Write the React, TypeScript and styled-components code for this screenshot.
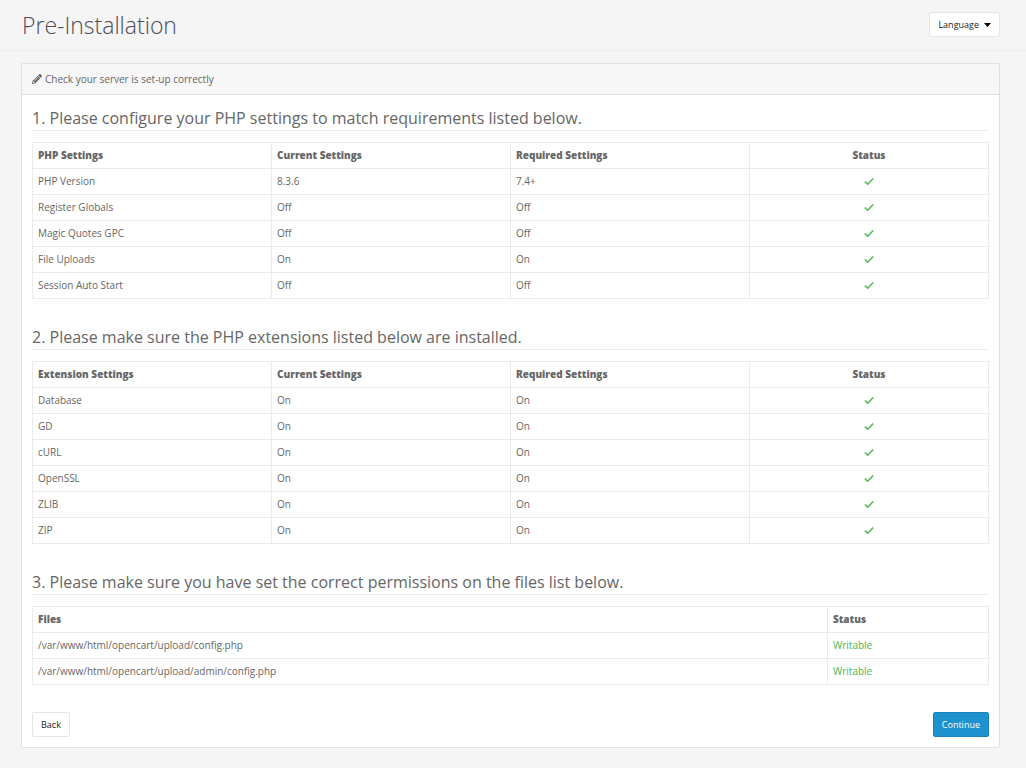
import React from "react";
import styled, { createGlobalStyle } from "styled-components";
import { FaPencilAlt } from "react-icons/fa";

const GlobalStyle = createGlobalStyle`
  *, *::before, *::after { box-sizing: border-box; }
  body {
    margin: 0;
    background: #f5f5f5;
    color: #666;
    font: 400 10px/15px "Open Sans", "Noto Sans", sans-serif;
  }
`;

const Header = styled.header`
  display: flex;
  justify-content: space-between;
  align-items: flex-start;
  padding: 12px 26px 12px 22px;
  border-bottom: 1px solid #eee;
`;

const Title = styled.h1`
  margin: 0;
  font-size: 23px;
  font-weight: 300;
  line-height: 26px;
  color: #4c4d5a;
`;

const Button = styled.button<{ $primary?: boolean }>`
  display: inline-flex;
  align-items: center;
  gap: 5px;
  height: 25px;
  padding: 0 8px;
  border: 1px solid ${(p) => (p.$primary ? "#1b82ba" : "#e6e6e6")};
  border-radius: 2px;
  background: ${(p) => (p.$primary ? "#1e91cf" : "#fff")};
  color: ${(p) => (p.$primary ? "#fff" : "#222")};
  font: 500 9px/15px "Open Sans", "Noto Sans", sans-serif;
  cursor: pointer;
`;

const Panel = styled.main`
  margin: 12px 26px 20px 21px;
  border: 1px solid #e0e0e0;
  border-radius: 2px;
  background: #fff;
`;

const PanelHeading = styled.div`
  display: flex;
  align-items: center;
  gap: 3px;
  height: 31px;
  padding: 0 10px;
  border-bottom: 1px solid #dcdcdc;
  background: #f7f7f7;
`;

const PanelBody = styled.div`
  padding: 12px 10px 10px;
`;

const Section = styled.section`
  margin-bottom: 27px;
`;

const Legend = styled.h2`
  margin: 0 0 11px;
  border-bottom: 1px solid #eee;
  font-size: 16px;
  font-weight: 400;
  line-height: 23px;
`;

const Table = styled.table`
  width: 100%;
  table-layout: fixed;
  border-collapse: collapse;
`;

const Th = styled.th<{ $center?: boolean; $width?: string }>`
  width: ${(p) => p.$width ?? "25%"};
  height: 26px;
  padding: 0 5px;
  border: 1px solid #ebebeb;
  font-weight: 800;
  text-align: ${(p) => (p.$center ? "center" : "left")};
`;

const Td = styled.td<{ $center?: boolean; $ok?: boolean }>`
  height: 26px;
  padding: 0 5px;
  border: 1px solid #ebebeb;
  color: ${(p) => (p.$ok ? "#4cb64c" : "inherit")};
  text-align: ${(p) => (p.$center ? "center" : "left")};
`;

const CheckSvg = styled.svg`
  display: block;
  margin: 0 auto;
`;

const Actions = styled.div`
  display: flex;
  justify-content: space-between;
`;

const Check = () => (
  <CheckSvg width="10" height="10" viewBox="0 0 10 10" role="img" aria-label="OK">
    <path d="M.8 4.4 3.7 7.2 9.2 1.6" fill="none" stroke="#4cb64c" strokeWidth="1.4" />
  </CheckSvg>
);

type Row = [string, string, string];

const phpRows: Row[] = [
  ["PHP Version", "8.3.6", "7.4+"],
  ["Register Globals", "Off", "Off"],
  ["Magic Quotes GPC", "Off", "Off"],
  ["File Uploads", "On", "On"],
  ["Session Auto Start", "Off", "Off"],
];

const extensionRows: Row[] = ["Database", "GD", "cURL", "OpenSSL", "ZLIB", "ZIP"].map(
  (name): Row => [name, "On", "On"],
);

const files = ["/var/www/html/opencart/upload/config.php", "/var/www/html/opencart/upload/admin/config.php"];

const SettingsTable = ({ heading, rows }: { heading: string; rows: Row[] }) => (
  <Table>
    <thead>
      <tr>
        <Th>{heading}</Th>
        <Th>Current Settings</Th>
        <Th>Required Settings</Th>
        <Th $center>Status</Th>
      </tr>
    </thead>
    <tbody>
      {rows.map(([name, current, required]) => (
        <tr key={name}>
          <Td>{name}</Td>
          <Td>{current}</Td>
          <Td>{required}</Td>
          <Td $center>
            <Check />
          </Td>
        </tr>
      ))}
    </tbody>
  </Table>
);

export default function App() {
  return (
    <>
      <GlobalStyle />
      <Header>
        <Title>Pre-Installation</Title>
        <Button type="button" aria-haspopup="menu">
          Language
          <svg width="7" height="4" viewBox="0 0 7 4" aria-hidden="true">
            <path d="M0 0h7L3.5 4z" fill="#000" />
          </svg>
        </Button>
      </Header>
      <Panel>
        <PanelHeading>
          <FaPencilAlt size={10} aria-hidden="true" />
          Check your server is set-up correctly
        </PanelHeading>
        <PanelBody>
          <Section>
            <Legend>1. Please configure your PHP settings to match requirements listed below.</Legend>
            <SettingsTable heading="PHP Settings" rows={phpRows} />
          </Section>
          <Section>
            <Legend>2. Please make sure the PHP extensions listed below are installed.</Legend>
            <SettingsTable heading="Extension Settings" rows={extensionRows} />
          </Section>
          <Section>
            <Legend>3. Please make sure you have set the correct permissions on the files list below.</Legend>
            <Table>
              <thead>
                <tr>
                  <Th $width="auto">Files</Th>
                  <Th $width="161px">Status</Th>
                </tr>
              </thead>
              <tbody>
                {files.map((file) => (
                  <tr key={file}>
                    <Td>{file}</Td>
                    <Td $ok>Writable</Td>
                  </tr>
                ))}
              </tbody>
            </Table>
          </Section>
          <Actions>
            <Button type="button">Back</Button>
            <Button type="button" $primary>
              Continue
            </Button>
          </Actions>
        </PanelBody>
      </Panel>
    </>
  );
}
